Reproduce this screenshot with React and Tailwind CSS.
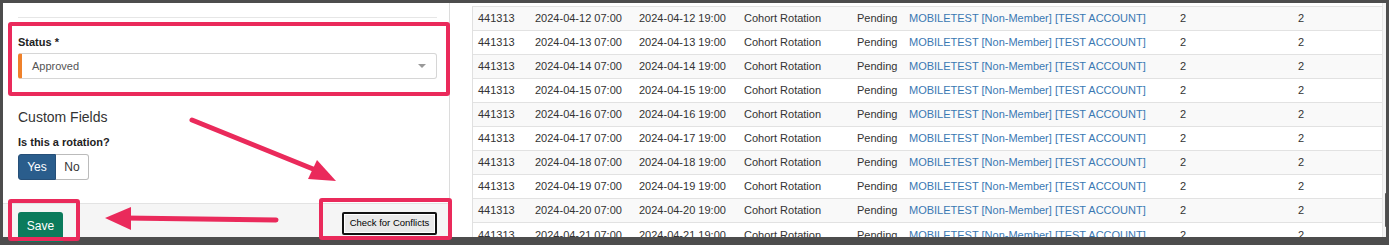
import React from 'react';

const rows = ['12', '13', '14', '15', '16', '17', '18', '19', '20', '21'];

function Arrows() {
  return (
    <svg className="absolute inset-0 pointer-events-none" width="1389" height="245" viewBox="0 0 1389 245">
      <line x1="192" y1="120" x2="318" y2="171" stroke="#ea2a5b" strokeWidth="5" strokeLinecap="round" />
      <polygon points="336,181 308,179 317,160" fill="#ea2a5b" />
      <line x1="276" y1="220" x2="124" y2="218" stroke="#ea2a5b" strokeWidth="5" strokeLinecap="round" />
      <polygon points="105,218 131,207 131,230" fill="#ea2a5b" />
    </svg>
  );
}

function App() {
  return (
    <div className="relative w-[1389px] h-[245px] bg-[#4d4d4d] pt-[3px] pl-[3px] pr-[3px] pb-[8px] overflow-hidden" style={{ fontFamily: '"Liberation Sans", Arial, sans-serif' }}>
      <div className="flex h-full bg-white">
        {/* left form panel */}
        <div className="w-[447px] shrink-0 flex flex-col border-r border-[#dcdcdc]">
          <div className="flex-1 pl-[15px] pr-[12px]">
            <div className="mt-[14px] border-t border-[#e6e6e6]" />
            <div className="mt-[16px] text-[11px] font-bold text-[#222] leading-[16px]">Status *</div>
            <div className="mt-[3px] h-[26px] flex items-center justify-between border border-[#d6d6d6] border-l-4 border-l-[#ef812b] rounded-[3px] pl-[10px] pr-[10px]">
              <span className="text-[11px] text-[#555]">Approved</span>
              <span className="w-0 h-0 border-l-[4px] border-r-[4px] border-t-[4px] border-l-transparent border-r-transparent border-t-[#999]" />
            </div>
            <div className="mt-[29px] text-[14px] text-[#333] leading-[18px]">Custom Fields</div>
            <div className="mt-[8px] text-[11px] font-bold text-[#222] leading-[16px]">Is this a rotation?</div>
            <div className="mt-[4px] flex h-[26px] w-[71px] text-[12px]">
              <div className="w-[38px] flex items-center justify-center bg-[#2a5d8c] text-white rounded-l-[3px] border border-[#264f78]">Yes</div>
              <div className="w-[33px] flex items-center justify-center bg-white text-[#333] rounded-r-[3px] border border-l-0 border-[#bbb]">No</div>
            </div>
          </div>
          <div className="h-[34px] bg-[#f5f5f5] border-t border-[#e3e3e3] flex items-start justify-between pl-[15px] pr-[12px] pt-[8px]">
            <div className="w-[45px] h-[30px] bg-[#0b7b5c] text-white text-[12px] rounded-t-[3px] flex items-center justify-center pb-[3px]">Save</div>
            <div className="w-[95px] h-[23px] flex items-center justify-center bg-[#e9e9e9] border-2 border-[#111] rounded-[2px] shadow-[inset_0_0_0_1px_#fff] text-[9.5px] text-black">Check for Conflicts</div>
          </div>
        </div>
        {/* gap */}
        <div className="w-[22px] shrink-0" />
        {/* table */}
        <div className="flex-1 flex">
          <div className="flex-1 mt-[3px] border-l border-[#e0e0e0] overflow-hidden">
            <table className="table-fixed w-full border-collapse text-[11px] text-[#333]">
              <colgroup>
                <col className="w-[58px]" />
                <col className="w-[104px]" />
                <col className="w-[105px]" />
                <col className="w-[113px]" />
                <col className="w-[52px]" />
                <col className="w-[271px]" />
                <col className="w-[118px]" />
                <col />
              </colgroup>
              <tbody>
                {rows.map((d, i) => (
                  <tr key={d} className={i % 2 === 0 ? 'bg-[#f9f9f9]' : 'bg-white'}>
                    <td className="h-[24px] pl-[5px] border-t border-[#e2e2e2] whitespace-nowrap">441313</td>
                    <td className="pl-[4px] border-t border-[#e2e2e2] whitespace-nowrap">2024-04-{d} 07:00</td>
                    <td className="pl-[4px] border-t border-[#e2e2e2] whitespace-nowrap">2024-04-{d} 19:00</td>
                    <td className="pl-[4px] border-t border-[#e2e2e2] whitespace-nowrap">Cohort Rotation</td>
                    <td className="pl-[4px] border-t border-[#e2e2e2] whitespace-nowrap">Pending</td>
                    <td className="pl-[4px] border-t border-[#e2e2e2] whitespace-nowrap text-[#3a78b3]">MOBILETEST [Non-Member] [TEST ACCOUNT]</td>
                    <td className="pl-[4px] border-t border-[#e2e2e2]">2</td>
                    <td className="pl-[4px] border-t border-[#e2e2e2]">2</td>
                  </tr>
                ))}
              </tbody>
            </table>
          </div>
          <div className="w-[4px] shrink-0 flex flex-col border-l border-[#e6e6e6] bg-[#f4f4f4]">
            <div className="h-[190px]" />
            <div className="h-[34px] ml-[2px] bg-[#555] rounded-l-sm" />
          </div>
        </div>
      </div>

      {/* annotation boxes */}
      <div className="absolute left-[8px] top-[22px] w-[442px] h-[74px] border-4 border-[#ea2a5b] rounded-[3px]" />
      <div className="absolute left-[8px] top-[199px] w-[72px] h-[42px] border-4 border-[#ea2a5b] rounded-[3px]" />
      <div className="absolute left-[319px] top-[198px] w-[133px] h-[42px] border-4 border-[#ea2a5b] rounded-[3px]" />
      <Arrows />
    </div>
  );
}

export default App;
